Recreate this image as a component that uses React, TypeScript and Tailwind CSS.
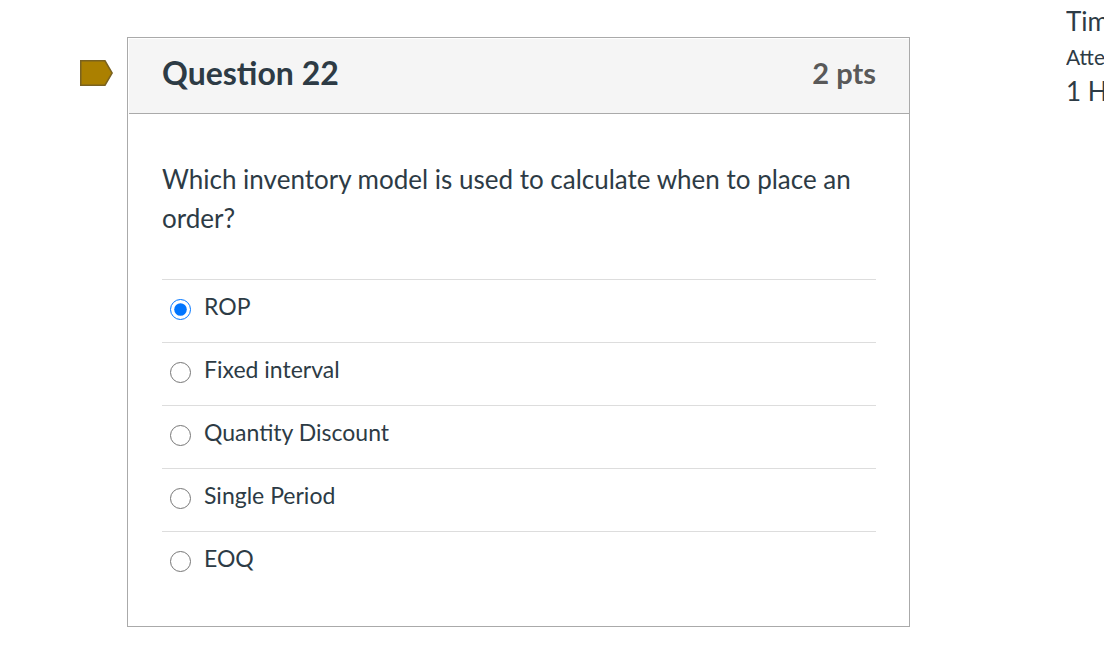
// Quiz question page: flag marker, question card, timer column on the right
import { useState } from 'react'

interface Answer {
  id: string
  label: string
}

const ANSWERS: Answer[] = [
  { id: 'rop', label: 'ROP' },
  { id: 'fixed', label: 'Fixed interval' },
  { id: 'quantity', label: 'Quantity Discount' },
  { id: 'single', label: 'Single Period' },
  { id: 'eoq', label: 'EOQ' },
]

function FlagButton() {
  return (
    <button type="button" aria-label="Flag question" className="mt-[22px] mr-3.5 h-7 shrink-0">
      <svg width="33" height="28" viewBox="0 0 33 28" className="block">
        <path d="M0.75 1.75H25L32.2 14L25 26.25H0.75Z" fill="#ab8000" stroke="#7a6220" strokeWidth="1.5" />
      </svg>
    </button>
  )
}

function QuestionCard() {
  const [selected, setSelected] = useState('rop')

  return (
    <section className="min-w-0 flex-1 border border-[#aaaaaa] pt-px pb-8">
      {/* Header */}
      <header className="ml-px flex h-[75px] items-center justify-between border-b border-[#aaaaaa] bg-[#f5f5f5] pr-[33px] pb-1.5 pl-[33px]">
        <h2 className="text-[32px] leading-10 font-bold">Question 22</h2>
        <span className="text-[29px] leading-10 font-bold text-[#595959]">2 pts</span>
      </header>

      {/* Question and answers */}
      <fieldset className="pt-[46px] pr-[33px] pl-[34px]">
        <legend className="float-left w-full pb-[41px] text-[26px] leading-[39px]">
          Which inventory model is used to calculate when to place an order?
        </legend>
        <div className="clear-both">
          {ANSWERS.map((a) => (
            <label key={a.id} className="flex h-[63px] items-start border-t border-[#dddddd] pt-2.5 pl-2">
              <input
                type="radio"
                name="answer"
                value={a.id}
                checked={selected === a.id}
                onChange={() => setSelected(a.id)}
                className="mt-[9px] mr-[13px] size-[21px] shrink-0"
              />
              <span className="text-[23px] leading-8">{a.label}</span>
            </label>
          ))}
        </div>
      </fieldset>
    </section>
  )
}

export default function App() {
  return (
    <div className="flex min-h-screen items-start overflow-hidden bg-white font-[Lato,sans-serif] text-[#2d3b45]">
      <main className="flex min-w-0 flex-1 items-start pt-[37px] pr-[156px] pb-6 pl-20">
        <FlagButton />
        <QuestionCard />
      </main>

      {/* Timer */}
      <aside className="w-[38px] shrink-0 overflow-hidden pt-[3px] whitespace-nowrap">
        <p className="text-[26px] leading-9">Tim</p>
        <p className="text-[21px] leading-9">Atte</p>
        <p className="text-[26px] leading-8">1 H</p>
      </aside>
    </div>
  )
}
